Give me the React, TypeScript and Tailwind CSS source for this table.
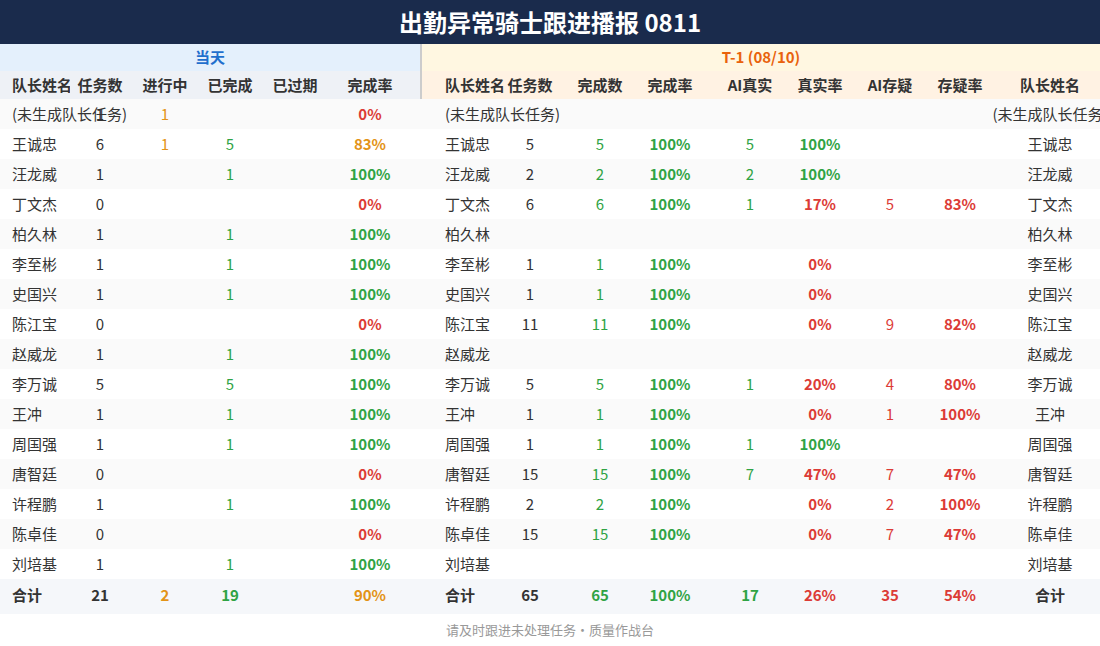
import React from 'react';

type Cell = { v: string; c?: string; b?: boolean };

const DARK = 'text-[#333333]';
const GREEN = 'text-[#2fa344]';
const RED = 'text-[#dc3b36]';
const ORANGE = 'text-[#e39317]';

const COLS =
  'grid grid-cols-[70px_60px_70px_60px_70px_90px_70px_80px_60px_80px_80px_60px_80px_60px_120px]';

function rate(v: string): Cell {
  if (!v) return { v: '' };
  if (v === '100%') return { v, c: GREEN, b: true };
  if (v === '0%') return { v, c: RED, b: true };
  return { v, c: ORANGE, b: true };
}

function n(v: string, c = DARK): Cell {
  return { v, c };
}

interface Row {
  name: string;
  today: [string, string, string, string, string];
  prev: [string, string, string, string, string, string, string];
}

const rows: Row[] = [
  { name: '(未生成队长任务)', today: ['1', '1', '', '', '0%'], prev: ['', '', '', '', '', '', ''] },
  { name: '王诚忠', today: ['6', '1', '5', '', '83%'], prev: ['5', '5', '100%', '5', '100%', '', ''] },
  { name: '汪龙威', today: ['1', '', '1', '', '100%'], prev: ['2', '2', '100%', '2', '100%', '', ''] },
  { name: '丁文杰', today: ['0', '', '', '', '0%'], prev: ['6', '6', '100%', '1', '17%', '5', '83%'] },
  { name: '柏久林', today: ['1', '', '1', '', '100%'], prev: ['', '', '', '', '', '', ''] },
  { name: '李至彬', today: ['1', '', '1', '', '100%'], prev: ['1', '1', '100%', '', '0%', '', ''] },
  { name: '史国兴', today: ['1', '', '1', '', '100%'], prev: ['1', '1', '100%', '', '0%', '', ''] },
  { name: '陈江宝', today: ['0', '', '', '', '0%'], prev: ['11', '11', '100%', '', '0%', '9', '82%'] },
  { name: '赵威龙', today: ['1', '', '1', '', '100%'], prev: ['', '', '', '', '', '', ''] },
  { name: '李万诚', today: ['5', '', '5', '', '100%'], prev: ['5', '5', '100%', '1', '20%', '4', '80%'] },
  { name: '王冲', today: ['1', '', '1', '', '100%'], prev: ['1', '1', '100%', '', '0%', '1', '100%'] },
  { name: '周国强', today: ['1', '', '1', '', '100%'], prev: ['1', '1', '100%', '1', '100%', '', ''] },
  { name: '唐智廷', today: ['0', '', '', '', '0%'], prev: ['15', '15', '100%', '7', '47%', '7', '47%'] },
  { name: '许程鹏', today: ['1', '', '1', '', '100%'], prev: ['2', '2', '100%', '', '0%', '2', '100%'] },
  { name: '陈卓佳', today: ['0', '', '', '', '0%'], prev: ['15', '15', '100%', '', '0%', '7', '47%'] },
  { name: '刘培基', today: ['1', '', '1', '', '100%'], prev: ['', '', '', '', '', '', ''] },
];

function Num({ cell, extra = '' }: { cell: Cell; extra?: string }) {
  return (
    <div className={`flex items-center justify-center whitespace-nowrap ${cell.c ?? DARK} ${cell.b ? 'font-bold' : ''} ${extra}`}>
      {cell.v}
    </div>
  );
}

function DataRow({ row, odd }: { row: Row; odd: boolean }) {
  const [t0, t1, t2, t3, t4] = row.today;
  const [p0, p1, p2, p3, p4, p5, p6] = row.prev;
  // 真实率: 100% green, anything else red
  const realRate = (v: string): Cell => (v === '100%' ? { v, c: GREEN, b: true } : v ? { v, c: RED, b: true } : { v: '' });
  return (
    <div className={`${COLS} h-[30px] text-[15px] ${odd ? 'bg-[#fafafa]' : 'bg-white'}`}>
      <div className={`flex items-center whitespace-nowrap pl-3 ${DARK}`}>{row.name}</div>
      <Num cell={n(t0)} />
      <Num cell={n(t1, ORANGE)} />
      <Num cell={n(t2, GREEN)} />
      <Num cell={n(t3)} />
      <Num cell={rate(t4)} extra="pr-2.5" />
      <div className={`flex items-center whitespace-nowrap pl-[25px] ${DARK}`}>{row.name}</div>
      <Num cell={n(p0)} />
      <Num cell={n(p1, GREEN)} />
      <Num cell={p2 ? { v: p2, c: GREEN, b: true } : { v: '' }} />
      <Num cell={n(p3, GREEN)} />
      <Num cell={realRate(p4)} />
      <Num cell={n(p5, RED)} />
      <Num cell={p6 ? { v: p6, c: RED, b: true } : { v: '' }} />
      <div className={`flex items-center justify-center whitespace-nowrap ${DARK}`}>{row.name}</div>
    </div>
  );
}

export default function App() {
  const todayHeads = ['任务数', '进行中', '已完成', '已过期', '完成率'];
  const prevHeads = ['任务数', '完成数', '完成率', 'AI真实', '真实率', 'AI存疑', '存疑率'];

  return (
    <div
      className="h-[646px] w-[1100px] overflow-hidden bg-white"
      style={{ fontFamily: '"Noto Sans CJK SC", "Noto Sans", sans-serif' }}
    >
      <div className="flex h-[44px] items-center justify-center bg-[#1a2b4c] pb-px text-[24px] font-bold text-white">
        出勤异常骑士跟进播报 0811
      </div>

      <div className="w-[1110px]">
        {/* group heads */}
        <div className={`${COLS} h-[27px] text-[15px] font-bold`}>
          <div className="col-span-6 flex items-center justify-center bg-[#e4f0fc] text-[#1f6fcd]">当天</div>
          <div className="col-span-9 flex items-center justify-center border-l-2 border-[#cccccc] bg-[#fff7e1] pr-[10px] text-[#e9620c]">
            T-1 (08/10)
          </div>
        </div>

        {/* column heads */}
        <div className={`${COLS} h-[28px] text-[15px] font-bold ${DARK}`}>
          <div className="flex items-center whitespace-nowrap bg-[#eef1f6] pl-3">队长姓名</div>
          {todayHeads.map((h, i) => (
            <div
              key={h}
              className={`flex items-center justify-center whitespace-nowrap bg-[#eef1f6] ${i === 4 ? 'pr-2.5' : ''}`}
            >
              {h}
            </div>
          ))}
          <div className="relative z-10 flex items-center whitespace-nowrap border-l-2 border-[#cccccc] bg-[#fff2e3] pl-[23px]">
            队长姓名
          </div>
          {prevHeads.map((h) => (
            <div key={h} className="flex items-center justify-center whitespace-nowrap bg-[#fff2e3]">
              {h}
            </div>
          ))}
          <div className="flex items-center justify-center whitespace-nowrap bg-[#fff2e3]">队长姓名</div>
        </div>

        {rows.map((r, i) => (
          <DataRow key={r.name} row={r} odd={i % 2 === 0} />
        ))}

        {/* totals */}
        <div className={`${COLS} h-[35px] bg-[#f5f7fa] pb-0.5 text-[15px] font-bold`}>
          <div className={`flex items-center pl-3 ${DARK}`}>合计</div>
          <Num cell={{ v: '21', b: true }} />
          <Num cell={{ v: '2', c: ORANGE, b: true }} />
          <Num cell={{ v: '19', c: GREEN, b: true }} />
          <Num cell={{ v: '' }} />
          <Num cell={{ v: '90%', c: ORANGE, b: true }} extra="pr-2.5" />
          <div className={`flex items-center pl-[25px] ${DARK}`}>合计</div>
          <Num cell={{ v: '65', b: true }} />
          <Num cell={{ v: '65', c: GREEN, b: true }} />
          <Num cell={{ v: '100%', c: GREEN, b: true }} />
          <Num cell={{ v: '17', c: GREEN, b: true }} />
          <Num cell={{ v: '26%', c: RED, b: true }} />
          <Num cell={{ v: '35', c: RED, b: true }} />
          <Num cell={{ v: '54%', c: RED, b: true }} />
          <div className={`flex items-center justify-center ${DARK}`}>合计</div>
        </div>
      </div>

      <div className="flex h-[31px] items-center justify-center text-[13px] text-[#999999]">
        请及时跟进未处理任务·质量作战台
      </div>
    </div>
  );
}
